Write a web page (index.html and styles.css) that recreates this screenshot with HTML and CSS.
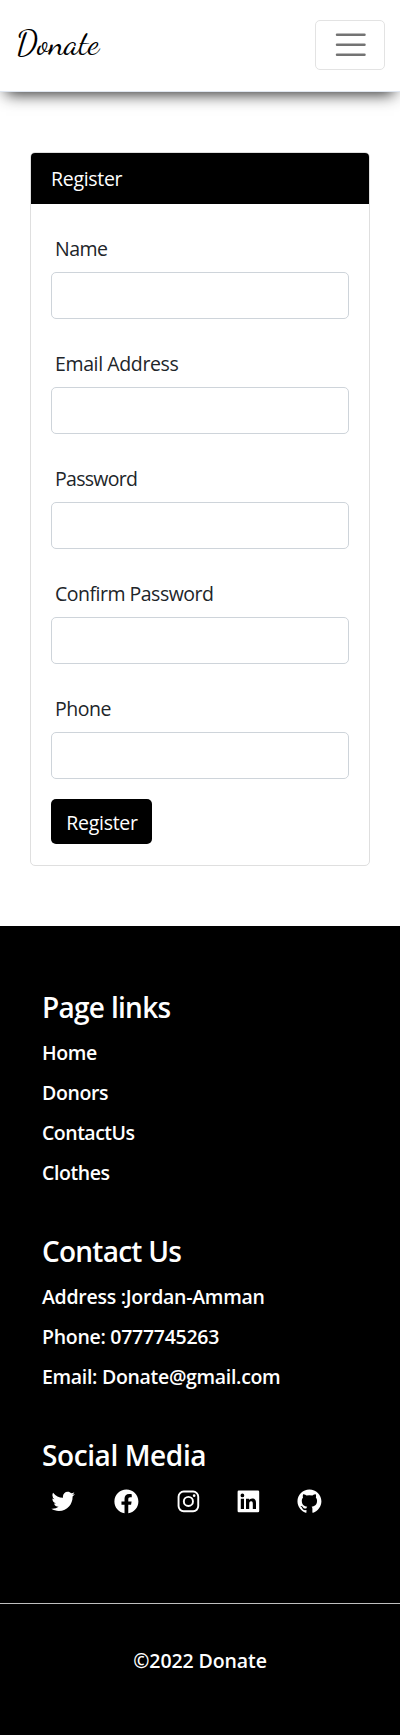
FILE: index.html
```html
<!DOCTYPE html>
<html lang="en">
<head>
<meta charset="utf-8">
<meta name="viewport" content="width=device-width, initial-scale=1">
<title>Donate</title>
<link rel="stylesheet" href="styles.css">
</head>
<body>
<header class="navbar">
  <div class="brand">Donate</div>
  <button class="toggler" type="button" aria-label="Menu">
    <svg class="toggler-icon" viewBox="0 0 30 30"><path d="M4 7h22M4 15h22M4 23h22"/></svg>
  </button>
</header>
<main class="main">
  <section class="card">
    <div class="card-header"><span class="t-register">Register</span></div>
    <form class="card-body">
      <div class="field"><label class="t-name" for="name">Name</label><input id="name" type="text"></div>
      <div class="field"><label class="t-email" for="email">Email Address</label><input id="email" type="email"></div>
      <div class="field"><label class="t-password" for="password">Password</label><input id="password" type="password"></div>
      <div class="field"><label class="t-confirm" for="confirm">Confirm Password</label><input id="confirm" type="password"></div>
      <div class="field"><label class="t-phone" for="phone">Phone</label><input id="phone" type="text"></div>
      <button class="submit" type="button"><span class="t-register">Register</span></button>
    </form>
  </section>
</main>
<footer class="footer">
  <div class="columns">
    <section class="column">
      <h4 class="h-links">Page links</h4>
      <ul>
        <li class="f-home">Home</li>
        <li class="f-donors">Donors</li>
        <li class="f-contact">ContactUs</li>
        <li class="f-clothes">Clothes</li>
      </ul>
    </section>
    <section class="column">
      <h4 class="h-contact">Contact Us</h4>
      <ul>
        <li class="f-address">Address :Jordan-Amman</li>
        <li class="f-phone">Phone: 0777745263</li>
        <li class="f-email">Email: Donate@gmail.com</li>
      </ul>
    </section>
    <section class="column">
      <h4 class="h-social">Social Media</h4>
      <div class="social">
        <svg viewBox="0 0 24 24"><path d="M19.633 7.997c.013.175.013.349.013.523 0 5.325-4.053 11.461-11.46 11.461-2.282 0-4.402-.661-6.186-1.809.324.037.636.05.973.05a8.07 8.07 0 0 0 5.001-1.721 4.036 4.036 0 0 1-3.767-2.793c.249.037.499.062.761.062.361 0 .724-.05 1.061-.137a4.027 4.027 0 0 1-3.23-3.953v-.05c.537.299 1.16.486 1.82.511a4.022 4.022 0 0 1-1.796-3.354c0-.748.199-1.434.548-2.032a11.457 11.457 0 0 0 8.306 4.215c-.062-.3-.1-.611-.1-.923a4.026 4.026 0 0 1 4.028-4.028c1.16 0 2.207.486 2.943 1.272a7.957 7.957 0 0 0 2.556-.973 4.02 4.02 0 0 1-1.771 2.22 8.073 8.073 0 0 0 2.319-.624 8.645 8.645 0 0 1-2.019 2.083z"/></svg>
        <svg class="facebook" viewBox="0 0 24 24"><path d="M12.001 2.002c-5.522 0-9.999 4.477-9.999 9.999 0 4.99 3.656 9.126 8.437 9.879v-6.988h-2.54v-2.891h2.54V9.798c0-2.508 1.493-3.891 3.776-3.891 1.094 0 2.24.195 2.24.195v2.459h-1.264c-1.24 0-1.628.772-1.628 1.563v1.875h2.771l-.443 2.891h-2.328v6.988C18.344 21.129 22 16.992 22 12.001c0-5.522-4.477-9.999-9.999-9.999z"/></svg>
        <svg viewBox="0 0 24 24"><rect class="outline" x="3.8" y="3.8" width="16.4" height="16.4" rx="4.3"/><circle class="outline" cx="12" cy="12" r="3.8"/><circle cx="16.8" cy="7.2" r="1.1"/></svg>
        <svg viewBox="0 0 24 24"><path d="M20 3H4a1 1 0 0 0-1 1v16a1 1 0 0 0 1 1h16a1 1 0 0 0 1-1V4a1 1 0 0 0-1-1zM8.339 18.337H5.667v-8.59h2.672v8.59zM7.003 8.574a1.548 1.548 0 1 1 0-3.096 1.548 1.548 0 0 1 0 3.096zm11.335 9.763h-2.669V14.16c0-.996-.018-2.277-1.388-2.277-1.39 0-1.601 1.086-1.601 2.207v4.248h-2.667v-8.59h2.56v1.174h.037c.355-.675 1.227-1.387 2.524-1.387 2.704 0 3.203 1.778 3.203 4.092v4.71z"/></svg>
        <svg viewBox="0 0 24 24"><path d="M12.026 2c-5.509 0-9.974 4.465-9.974 9.974 0 4.406 2.857 8.145 6.821 9.465.499.09.679-.217.679-.481 0-.237-.008-.865-.011-1.696-2.775.602-3.361-1.338-3.361-1.338-.452-1.152-1.107-1.459-1.107-1.459-.905-.619.069-.605.069-.605 1.002.07 1.527 1.028 1.527 1.028.89 1.524 2.336 1.084 2.902.829.091-.645.351-1.085.635-1.334-2.214-.251-4.542-1.107-4.542-4.93 0-1.087.389-1.979 1.024-2.675-.101-.253-.446-1.268.099-2.64 0 0 .837-.269 2.742 1.021a9.582 9.582 0 0 1 2.496-.336 9.554 9.554 0 0 1 2.496.336c1.906-1.291 2.742-1.021 2.742-1.021.545 1.372.203 2.387.099 2.64.64.696 1.024 1.587 1.024 2.675 0 3.833-2.33 4.675-4.552 4.922.355.308.675.916.675 1.846 0 1.334-.012 2.41-.012 2.737 0 .267.178.577.687.479C19.146 20.115 22 16.379 22 11.974 22 6.465 17.535 2 12.026 2z"/></svg>
      </div>
    </section>
  </div>
  <div class="copyright"><span class="f-copy">©2022 Donate</span></div>
</footer>
</body>
</html>
```

FILE: styles.css
```css
* { box-sizing: border-box; }
body {
  margin: 0;
  background: #fff;
  color: #212529;
  font: 400 19.5px/30px "Segoe UI", "Open Sans", "Noto Sans", sans-serif;
}
.navbar {
  display: flex;
  justify-content: space-between;
  align-items: flex-start;
  height: 92px;
  padding: 20px 15px 0 16px;
  background: #fff;
  border-bottom: 1px solid #dfe6f0;
  box-shadow: 0 8px 15px -6px rgba(0, 0, 0, .85);
}
.brand {
  margin-top: 1px;
  color: #000;
  font: 400 33px/46px "Dancing Script", cursive;
}
.toggler {
  display: flex;
  align-items: center;
  justify-content: center;
  width: 70px;
  height: 50px;
  padding: 0 0 0 2px;
  background: transparent;
  border: 1px solid #e3e3e3;
  border-radius: 5px;
}
.toggler-icon {
  width: 37.5px;
  height: 37.5px;
  fill: none;
  stroke: rgba(0, 0, 0, .55);
  stroke-width: 2;
  stroke-linecap: round;
}
.main { padding: 60px 30px; }
.card {
  border: 1px solid #dfdfdf;
  border-radius: 5px;
  overflow: hidden;
}
.card-header {
  height: 51px;
  padding: 11px 20px 9px;
  background: #000;
  color: #fff;
}
.card-body { padding: 30px 20px 21px; }
.field {
  display: grid;
  gap: 8px;
  margin-bottom: 30px;
}
.field:last-of-type { margin-bottom: 20px; }
.field label { padding-left: 4px; }
.field input {
  width: 100%;
  height: 47px;
  border: 1px solid #ced4da;
  border-radius: 5px;
  background: #fff;
}
.submit {
  display: block;
  width: 101px;
  height: 45px;
  padding: 3px 0 0 1px;
  border: 0;
  border-radius: 5px;
  background: #000;
  color: #fff;
  font: inherit;
}
.t-register { letter-spacing: -.3px; }
.t-name { letter-spacing: -.5px; }
.t-email { letter-spacing: -.38px; }
.t-password { letter-spacing: -.7px; }
.t-confirm { letter-spacing: -.5px; }
.t-phone { letter-spacing: -.5px; }
.footer {
  height: 809px;
  background: #000;
  color: #fff;
  font-weight: 600;
}
.columns {
  display: grid;
  align-content: start;
  gap: 46px;
  height: 677px;
  padding: 64px 42px 0;
}
.column h4 {
  margin: 0 0 14px;
  font-size: 28px;
  line-height: 34px;
  font-weight: 600;
}
.column ul {
  display: grid;
  gap: 10px;
  margin: 0;
  padding: 0;
  list-style: none;
}
.column .h-links { letter-spacing: -.7px; }
.h-contact { letter-spacing: -.75px; }
.h-social { letter-spacing: -.4px; }
.f-home, .f-donors { letter-spacing: -.4px; }
.f-contact { letter-spacing: -.5px; }
.f-clothes { letter-spacing: -.42px; }
.f-address { letter-spacing: -.27px; }
.f-phone { letter-spacing: -.28px; }
.f-email { letter-spacing: -.31px; }
.f-copy { letter-spacing: -.1px; }
.social {
  display: flex;
  gap: 32px;
  padding: 1px 0 0 7px;
}
.social svg {
  width: 28.8px;
  height: 28.8px;
  fill: #fff;
}
.social .facebook { margin: 0 1px 0 2px; }
.social .outline {
  fill: none;
  stroke: #fff;
  stroke-width: 1.6;
}
.copyright {
  padding-top: 42px;
  border-top: 1px solid #bfbfbf;
  text-align: center;
}
```
